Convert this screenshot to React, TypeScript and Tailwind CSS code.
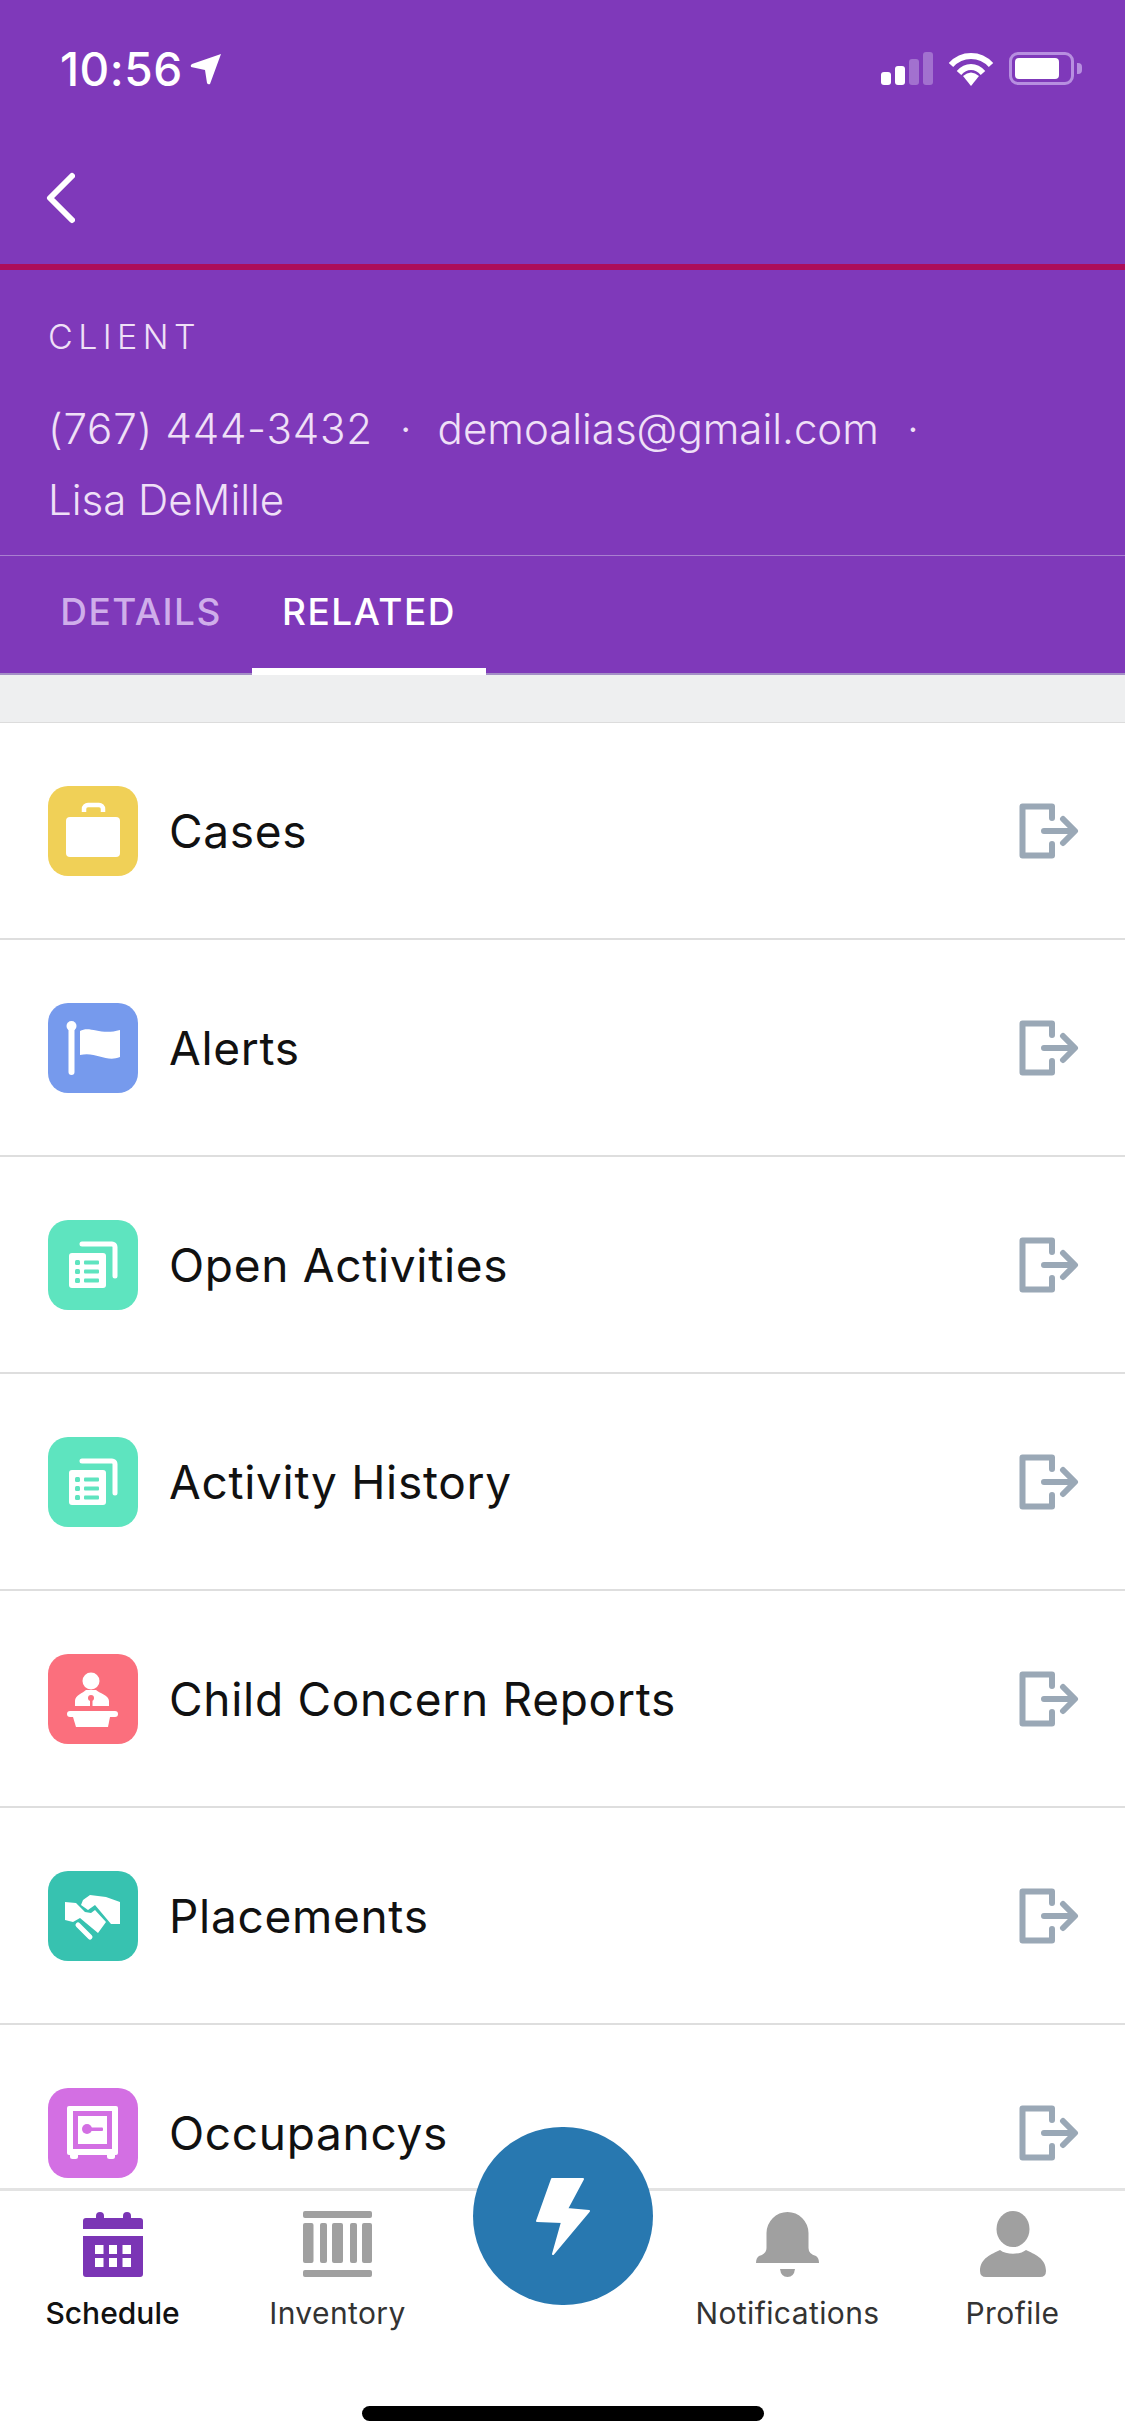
import type { ReactNode } from "react";

function IconBox({ color, children }: { color: string; children: ReactNode }) {
  return (
    <div className={`w-[90px] h-[90px] rounded-[20px] shrink-0 ${color}`}>
      <svg viewBox="0 0 90 90" className="w-full h-full" fill="#fff">
        {children}
      </svg>
    </div>
  );
}

function Activities() {
  return (
    <>
      <path d="M34 24H64a3 3 0 0 1 3 3V56" fill="none" stroke="#fff" strokeWidth="5" strokeLinecap="round" />
      <rect x="21" y="33" width="37" height="35" rx="3" />
      <g fill="#5ee4bf">
        <rect x="27" y="40" width="5" height="5" rx="1.5" />
        <rect x="27" y="49" width="5" height="5" rx="1.5" />
        <rect x="27" y="58" width="5" height="5" rx="1.5" />
        <rect x="36" y="40.5" width="15" height="4" rx="1" />
        <rect x="36" y="49.5" width="15" height="4" rx="1" />
        <rect x="36" y="58.5" width="15" height="4" rx="1" />
      </g>
    </>
  );
}

const rows: { label: string; color: string; icon: ReactNode }[] = [
  {
    label: "Cases",
    color: "bg-[#f0d057]",
    icon: (
      <>
        <path d="M36 26v-3a4 4 0 0 1 4-4h11a4 4 0 0 1 4 4v3" fill="none" stroke="#fff" strokeWidth="4.5" />
        <rect x="18" y="31" width="54" height="40" rx="4" />
      </>
    ),
  },
  {
    label: "Alerts",
    color: "bg-[#769aed]",
    icon: (
      <>
        <circle cx="23.5" cy="23" r="5" />
        <rect x="20.5" y="23" width="6" height="49" rx="3" />
        <path d="M32 28C42 22 52 33 72 27V54C58 60 48 48 32 52Z" />
      </>
    ),
  },
  { label: "Open Activities", color: "bg-[#5ee4bf]", icon: <Activities /> },
  { label: "Activity History", color: "bg-[#5ee4bf]", icon: <Activities /> },
  {
    label: "Child Concern Reports",
    color: "bg-[#fb6f7d]",
    icon: (
      <>
        <circle cx="43" cy="27" r="8.5" />
        <path d="M27 52V47C27 41 35 39 38 36H48C51 39 61 41 61 47V52Z" />
        <circle cx="43" cy="44" r="3" fill="#fb6f7d" />
        <rect x="42" y="44" width="2.5" height="9" fill="#fb6f7d" />
        <rect x="19" y="57" width="51" height="6" rx="3" />
        <path d="M25 63H62L60 73H28Z" />
      </>
    ),
  },
  {
    label: "Placements",
    color: "bg-[#37c2b0]",
    icon: (
      <>
        <path d="M35 29L42 24L58 26L72 31V53H63L47 34L40 39L33 34Z" />
        <path d="M17 31L28 32L37 41L43 42L47 39L58 51L50 62L32 47L25 51L17 49Z" />
        <path d="M30 54L42 66" stroke="#fff" strokeWidth="5" strokeLinecap="round" />
      </>
    ),
  },
  {
    label: "Occupancys",
    color: "bg-[#d36fe3]",
    icon: (
      <>
        <rect x="19" y="18" width="51" height="49" rx="2" />
        <rect x="22" y="64" width="8" height="7" rx="2.5" />
        <rect x="59" y="64" width="8" height="7" rx="2.5" />
        <path fillRule="evenodd" d="M25 23H64V61H25ZM30 28V56H59V28Z" fill="#d36fe3" />
        <circle cx="39" cy="41" r="5" fill="#d36fe3" />
        <rect x="40" y="39.5" width="15" height="3.5" rx="1" fill="#d36fe3" />
      </>
    ),
  },
];

function ExitIcon() {
  return (
    <svg viewBox="0 0 60 56" className="w-[60px] h-[56px] shrink-0" fill="none" stroke="#9aa8b6" strokeWidth="6" strokeLinecap="round" strokeLinejoin="round">
      <path d="M33 15V3.500H3.500V52.500H33V41" />
      <path d="M25 28H55M44 16L56 28L44 40" />
    </svg>
  );
}

function Tab({ label, active, children }: { label: string; active?: boolean; children: ReactNode }) {
  return (
    <div className="flex flex-col items-center">
      <div className="h-[66px] flex items-center justify-center">{children}</div>
      <span className={`mt-[18px] text-[30px] leading-[36px] ${active ? "text-[#111] font-medium" : "text-[#333] tracking-[0.4px]"}`}>{label}</span>
    </div>
  );
}

export default function App() {
  return (
    <div className="relative w-[1125px] h-[2436px] overflow-hidden flex flex-col bg-white font-['Inter',sans-serif]">
      <header className="bg-[#7f39ba] shrink-0">
        {/* status bar */}
        <div className="h-[108px] flex justify-between pl-[60px] pr-[43px] pt-[44px]">
          <div className="flex items-start gap-[7px] text-white">
            <span className="text-[46px] leading-[50px] font-medium tracking-[0.5px]">10:56</span>
            <svg viewBox="0 0 32 32" className="w-[32px] h-[32px] mt-[9px]" fill="#fff">
              <path d="M31 1L20 31Q18 32 17 30L15 17L1 14Q0 12 2 11Z" />
            </svg>
          </div>
          <div className="flex items-start gap-[15px] pt-[8px]">
            <div className="flex items-end gap-[4px] h-[33px]">
              <div className="w-[10px] h-[13px] rounded-[3px] bg-white" />
              <div className="w-[10px] h-[19px] rounded-[3px] bg-white" />
              <div className="w-[10px] h-[26px] rounded-[3px] bg-[#a271cf]" />
              <div className="w-[10px] h-[33px] rounded-[3px] bg-[#a271cf]" />
            </div>
            <svg viewBox="0 0 46 34" className="w-[46px] h-[34px]" fill="none" stroke="#fff" strokeWidth="6">
              <path d="M3 13C14 1 32 1 43 13" />
              <path d="M11 21C18 13 28 13 35 21" />
              <path d="M15 24Q23 17 31 24L23 34Z" fill="#fff" stroke="none" />
            </svg>
            <div className="flex items-center gap-[3px]">
              <div className="w-[65px] h-[33px] rounded-[9px] border-[3px] border-[#b78fe0] p-[3px] pr-[12px]">
                <div className="w-full h-full rounded-[4px] bg-white" />
              </div>
              <div className="w-[5px] h-[11px] rounded-r-[4px] bg-[#b78fe0]" />
            </div>
          </div>
        </div>

        {/* nav */}
        <div className="h-[156px] pl-[45px] pt-[64px]">
          <svg viewBox="0 0 30 52" className="w-[30px] h-[52px]" fill="none" stroke="#fff" strokeWidth="6" strokeLinecap="round" strokeLinejoin="round">
            <path d="M27 4L5 26L27 48" />
          </svg>
        </div>
        <div className="h-[6px] bg-[#ad0d5a]" />

        {/* client */}
        <div className="pt-[47px] pb-[20px] pl-[48px] pr-[40px] border-b border-[#a97fd0] text-[#efe0f7] font-light">
          <div className="text-[34px] leading-[40px] tracking-[5.4px]">CLIENT</div>
          <div className="mt-[36px] text-[42px] leading-[71px]">
            <div className="flex">
              <span className="tracking-[0.8px]">(767) 444-3432</span>
              <span className="ml-[27px]">·</span>
              <span className="ml-[26px]">demoalias@gmail.com</span>
              <span className="ml-[28px]">·</span>
            </div>
            <div>Lisa DeMille</div>
          </div>
        </div>

        {/* tabs */}
        <div className="h-[119px] flex pl-[30px] border-b-2 border-[#a48fc6]">
          <div className="h-[119px] w-[222px] flex items-center justify-center text-[37px] font-medium tracking-[1.5px] text-[#cfaeea] border-b-[7px] border-transparent">DETAILS</div>
          <div className="h-[119px] w-[234px] flex items-center justify-center text-[37px] font-medium tracking-[1.5px] text-white border-b-[7px] border-white">RELATED</div>
        </div>
      </header>

      <div className="h-[48px] shrink-0 bg-[#eeeff0] border-b border-[#dcdcdc]" />

      <main className="flex-1 min-h-0 overflow-hidden">
        {rows.map((row) => (
          <div key={row.label} className="h-[217px] flex items-center pl-[48px] pr-[46px] border-b-2 border-[#dedede]">
            <IconBox color={row.color}>{row.icon}</IconBox>
            <span className="ml-[31px] pt-[2px] flex-1 text-[46px] text-[#111] tracking-[0.7px]">{row.label}</span>
            <ExitIcon />
          </div>
        ))}
      </main>

      <nav className="h-[248px] shrink-0 border-t-[3px] border-[#e3e3e3] bg-white flex flex-col">
        <div className="grid grid-cols-5 pt-[20px]">
          <Tab label="Schedule" active>
            <svg viewBox="0 0 60 65" className="w-[60px] h-[65px]" fill="#7b35b5">
              <rect x="13" y="0" width="8" height="10" rx="4" />
              <rect x="40" y="0" width="8" height="10" rx="4" />
              <path d="M3 6H57a3 3 0 0 1 3 3V17H0V9a3 3 0 0 1 3-3Z" />
              <path fillRule="evenodd" d="M0 24H60V62a3 3 0 0 1-3 3H3a3 3 0 0 1-3-3ZM12 33V42H20.5V33ZM26 33V42H34V33ZM39.5 33V42H48V33ZM12 46V55H20.5V46ZM26 46V55H34V46ZM39.5 46V55H48V46Z" />
            </svg>
          </Tab>
          <Tab label="Inventory">
            <svg viewBox="0 0 69 66" className="w-[69px] h-[66px]" fill="#a0a0a0">
              <rect x="0" y="0" width="69" height="7" rx="2" />
              <rect x="0" y="12" width="10.5" height="40" rx="2" />
              <rect x="17" y="12" width="7" height="40" rx="2" />
              <rect x="29" y="12" width="11" height="40" rx="2" />
              <rect x="47" y="12" width="7" height="40" rx="2" />
              <rect x="59" y="12" width="10" height="40" rx="2" />
              <rect x="0" y="59" width="69" height="7" rx="2" />
            </svg>
          </Tab>
          <div />
          <Tab label="Notifications">
            <svg viewBox="0 0 63 65" className="w-[63px] h-[65px]" fill="#a0a0a0">
              <path d="M10.5 21A21 21 0 0 1 52.500 21V36Q52.500 42 60 44Q63 46 63 51H0Q0 46 3 44Q10.500 42 10.500 36Z" />
              <path d="M24 57H39Q38 65 31.500 65Q25 65 24 57Z" />
            </svg>
          </Tab>
          <Tab label="Profile">
            <svg viewBox="0 0 66 66" className="w-[66px] h-[66px]" fill="#a0a0a0">
              <ellipse cx="33" cy="18" rx="16.500" ry="18" />
              <path d="M0 60C0 47 12 43 20 39C26 44 40 44 46 39C54 43 66 47 66 60Q66 66 60 66H6Q0 66 0 60Z" />
            </svg>
          </Tab>
        </div>
        <div className="mt-[75px] mx-auto w-[402px] h-[15px] rounded-full bg-black" />
      </nav>

      {/* action button sits over the list and the tab bar */}
      <div className="absolute left-[473px] top-[2127px] w-[180px] h-[178px] rounded-full bg-[#2878b0] flex items-center justify-center">
        <svg viewBox="0 0 54 78" className="w-[54px] h-[78px]" fill="#fff" stroke="#fff" strokeWidth="2" strokeLinejoin="round">
          <path d="M16 2H47L31 32L53 34L17 77L26 45L1 44Z" />
        </svg>
      </div>
    </div>
  );
}
